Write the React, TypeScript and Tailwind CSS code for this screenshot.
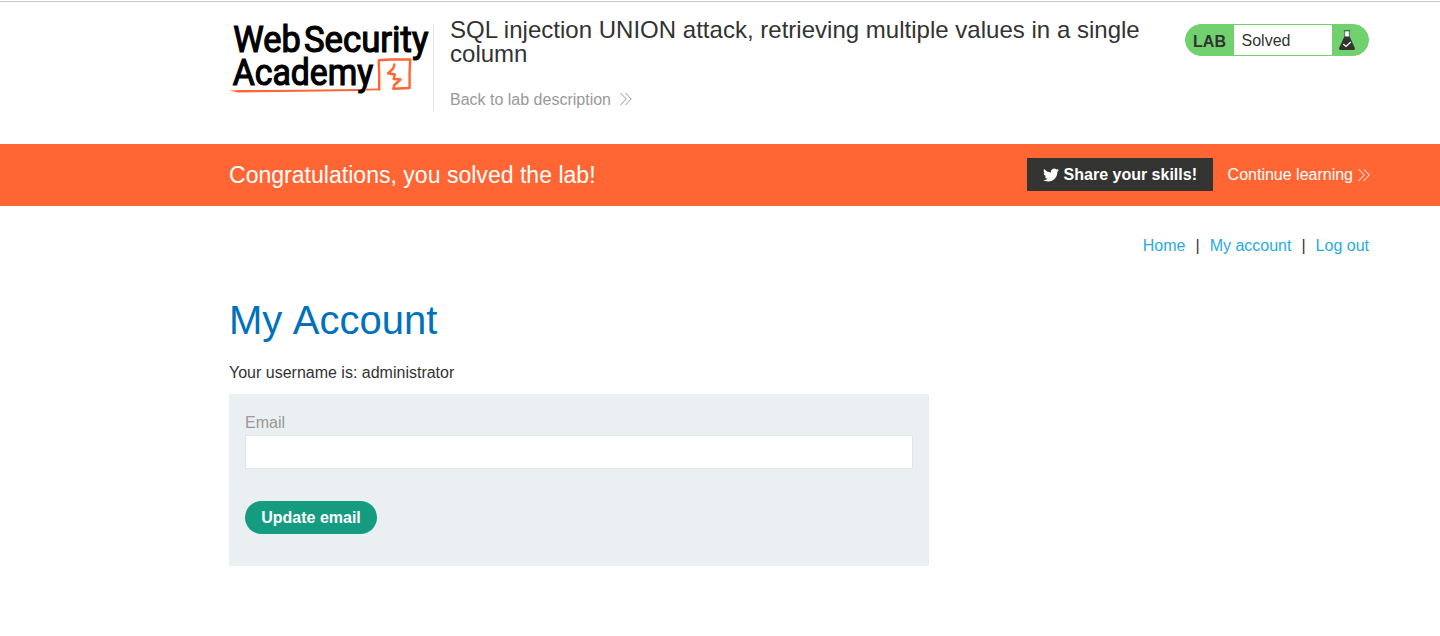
import React from 'react';

function Chevrons({ className }: { className: string }) {
  return (
    <svg className={className} width="12" height="14" viewBox="0 0 12 14" fill="none" stroke="currentColor" strokeWidth="1">
      <path d="M0.5 1L6.2 7L0.5 13M5.5 1L11.2 7L5.5 13" />
    </svg>
  );
}

function Logo() {
  return (
    <svg width="204" height="86" viewBox="229 24 204 86" className="block shrink-0 overflow-visible" aria-label="Web Security Academy">
      <g fill="#000" stroke="#000" strokeWidth="1.2" fontSize="36.6" fontWeight="400" className="font-[Roboto,sans-serif]">
        <text x="233.3" y="52.2" textLength="67.4" lengthAdjust="spacingAndGlyphs">Web</text>
        <text x="303.9" y="52.2" textLength="124.5" lengthAdjust="spacingAndGlyphs">Security</text>
        <text x="232.8" y="84.7" textLength="140.5" lengthAdjust="spacingAndGlyphs">Academy</text>
      </g>
      <g fill="none" stroke="#ff6633" strokeLinejoin="round" strokeLinecap="round">
        <path d="M379.2 89.5L379.2 75L378.7 61L379 60.2L391 59.5L410.2 59.5L409.6 72L409.6 88L393.5 88.7" strokeWidth="2.4" />
        <path d="M394.3 64.5L393.2 68.5L388 73.3L394.8 74.5L393.7 79L400.5 79.5L394 85.5L393.5 88.6" strokeWidth="2.4" />
        <path d="M379.3 89.3L366 89.6" strokeWidth="1.7" />
      </g>
      <path d="M229.5 90.4L240 90L300 89.8L358 88.9V91.1L300 91.8L238 92.5Z" fill="#ff6633" />
    </svg>
  );
}

function Flask() {
  return (
    <svg width="16" height="20" viewBox="0 0 16 20" className="block">
      <path d="M5.5 1.5H10.5V8H5.5Z" fill="#fff" />
      <path d="M4.7 0.6H11.3M5.7 1V7M10.3 1V7" stroke="#333332" strokeWidth="0.7" fill="none" />
      <path d="M5.4 6.5H10.6L16 18.3Q16 20 14.6 20H1.4Q0 20 0 18.3Z" fill="#333332" />
      <path d="M4.3 14L7 16.5L11.8 12" stroke="#fff" strokeWidth="1.2" fill="none" />
    </svg>
  );
}

function Bird() {
  return (
    <svg width="16" height="16" viewBox="0 0 24 24" fill="#fff" className="block">
      <path d="M23.953 4.57a10 10 0 01-2.825.775 4.958 4.958 0 002.163-2.723c-.951.555-2.005.959-3.127 1.184a4.92 4.92 0 00-8.384 4.482C7.69 8.095 4.067 6.13 1.64 3.162a4.822 4.822 0 00-.666 2.475c0 1.71.87 3.213 2.188 4.096a4.904 4.904 0 01-2.228-.616v.06a4.923 4.923 0 003.946 4.827 4.996 4.996 0 01-2.212.085 4.936 4.936 0 004.604 3.417 9.867 9.867 0 01-6.102 2.105c-.39 0-.779-.023-1.17-.067a13.995 13.995 0 007.557 2.209c9.053 0 13.998-7.496 13.998-13.985 0-.21 0-.42-.015-.63A9.935 9.935 0 0024 4.59z" />
    </svg>
  );
}

export default function App() {
  return (
    <div className="min-h-[636px] bg-white pt-px font-['Liberation_Sans',Arial,sans-serif] text-base text-[#333332]">
      <div className="h-px bg-[#c6c6c6]" />
      <header className="flex h-[142px] items-start pr-[71px] pl-[229px]">
        <div className="mt-[22px] border-r border-[#e4e4e4]">
          <Logo />
        </div>
        <div className="ml-4 w-[700px] pt-4">
          <h2 className="text-2xl leading-6 tracking-[0.015px]">SQL injection UNION attack, retrieving multiple values in a single column</h2>
          <a className="mt-[22px] flex h-6 items-center text-[#999999]">
            Back to lab description
            <Chevrons className="mb-[2px] ml-[9px]" />
          </a>
        </div>
        <div className="mt-[22px] ml-auto flex h-8 w-[184px] overflow-hidden rounded-full border border-[#70d16e] bg-[#70d16e]">
          <span className="w-12 pt-[5px] pl-[7px] font-bold tracking-[0.1px]">LAB</span>
          <span className="w-[98px] bg-white pt-1 pl-[7.5px]">Solved</span>
          <span className="pt-[5px] pl-[7px]">
            <Flask />
          </span>
        </div>
      </header>

      <section className="flex h-[62px] items-center bg-[#ff6633] pr-[71px] pl-[229px] text-white">
        <h4 className="text-[23px] tracking-[0.025px]">Congratulations, you solved the lab!</h4>
        <button className="mb-px ml-auto flex h-[33px] w-[186px] items-center bg-[#333332] pl-4 font-bold">
          <Bird />
          <span className="ml-[4.5px] whitespace-nowrap">Share your skills!</span>
        </button>
        <a className="-mr-[0.5px] ml-[14.5px] flex items-center whitespace-nowrap">
          Continue learning
          <Chevrons className="ml-[4.5px]" />
        </a>
      </section>

      <nav className="flex h-[78px] items-center justify-end gap-[10px] pt-[2px] pr-[71px]">
        <a className="text-[#29abe2]">Home</a>
        <span>|</span>
        <a className="text-[#29abe2]">My account</a>
        <span>|</span>
        <a className="text-[#29abe2]">Log out</a>
      </nav>

      <main className="pl-[229px]">
        <h1 className="mt-2 text-[40px] leading-[56px] text-[#0071bd] [word-spacing:1.5px]">My Account</h1>
        <p className="mt-[13px] leading-6">Your username is: administrator</p>
        <form className="mt-[9px] h-[172px] w-[700px] bg-[#eaeff2] px-4 pt-[17px]">
          <label className="block h-6 leading-6 text-[#999999]">Email</label>
          <input className="block h-[34px] w-full border border-[#e3e6e8] bg-white px-2 outline-none" type="email" />
          <button type="button" className="mt-8 block h-[33px] w-[132px] rounded-full bg-[#159c80] font-bold text-white">
            Update email
          </button>
        </form>
      </main>
    </div>
  );
}
